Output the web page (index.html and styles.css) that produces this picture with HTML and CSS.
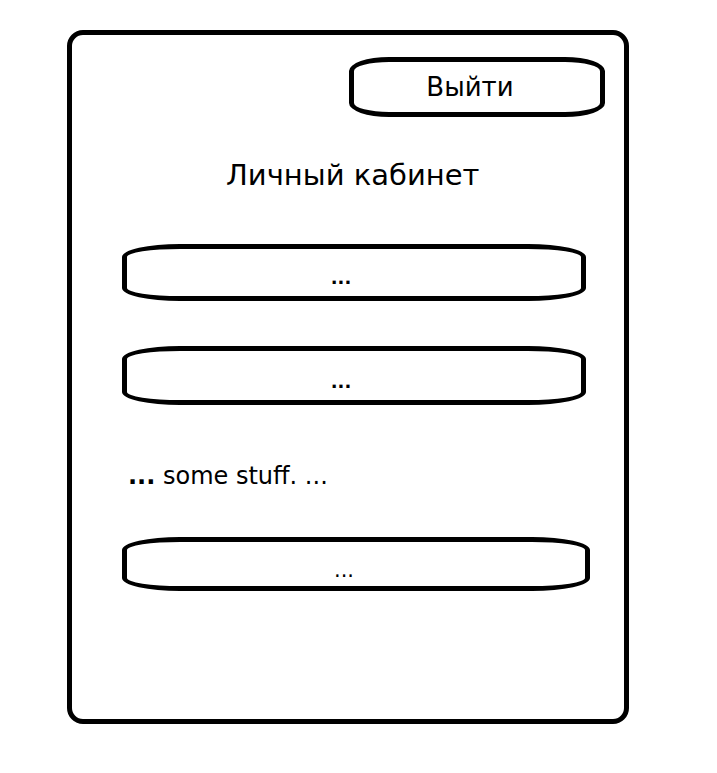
FILE: index.html
```html
<!DOCTYPE html>
<html>
<head>
    <title>Личный кабинет</title>
    <link rel="stylesheet" href="styles.css">
</head>
<body>
    <div class="frame">
        <div class="top-row">
            <button class="logout">Выйти</button>
        </div>
        <h1 class="title">Личный кабинет</h1>
        <div class="field field-first"><span class="dots">...</span></div>
        <div class="field field-second"><span class="dots">...</span></div>
        <p class="stuff"><b>...</b> some stuff. ...</p>
        <div class="field field-third"><span class="dots plain">...</span></div>
    </div>
</body>
</html>
```

FILE: styles.css
```css
body {
    margin: 0;
    padding: 0;
    background: #fff;
    font-family: "DejaVu Sans", Verdana, sans-serif;
    color: #000;
}

.frame {
    box-sizing: border-box;
    margin: 30px 0 0 67px;
    width: 562px;
    height: 694px;
    border: 5px solid #000;
    border-radius: 16px;
    padding: 22px 0 0 50px;
}

.top-row {
    display: flex;
    justify-content: flex-end;
    padding-right: 19px;
}

.logout {
    box-sizing: border-box;
    width: 256px;
    height: 60px;
    background: #fff;
    border: 5px solid #000;
    border-radius: 40px / 14px;
    font-family: inherit;
    font-size: 26px;
    color: #000;
    padding: 0 14px 0 0;
}

.title {
    margin: 38px 0 0 0;
    padding-left: 104px;
    font-size: 29px;
    font-weight: normal;
    line-height: 40px;
}

.field {
    box-sizing: border-box;
    width: 464px;
    height: 57px;
    border: 5px solid #000;
    border-radius: 58px / 13px;
    display: flex;
    justify-content: center;
    align-items: flex-end;
    padding-bottom: 8px;
}

.field-first {
    margin-top: 49px;
}

.field-second {
    margin-top: 45px;
    height: 59px;
}

.field-third {
    margin-top: 47px;
    width: 468px;
    height: 54px;
    padding-bottom: 6px;
}

.dots {
    color: #000;
    font-weight: bold;
    font-size: 18px;
    line-height: 20px;
    padding-right: 26px;
}

.dots.plain {
    font-size: 21px;
    font-weight: normal;
    padding-right: 24px;
}

.stuff {
    margin: 57px 0 0 6px;
    font-size: 24px;
    line-height: 28px;
}

.stuff b {
    font-size: 24px;
}
```
